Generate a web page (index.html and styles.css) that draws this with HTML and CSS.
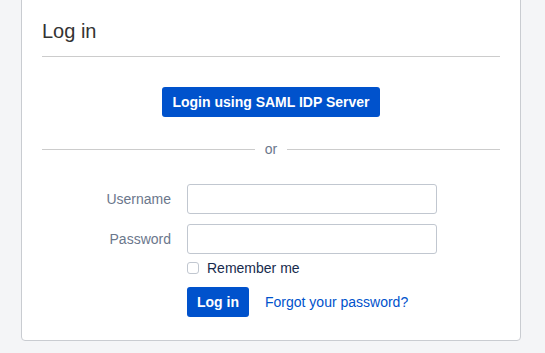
FILE: index.html
```html
<!DOCTYPE html>
<html lang="en">
  <head>
    <meta charset="UTF-8">
    <title>Log in</title>
    <link rel="stylesheet" href="styles.css">
  </head>
  <body>
    <div class="login-box">
      <h2 class="login-title">Log in</h2>

      <div class="sso-bar">
        <button class="btn btn-primary">Login using SAML IDP Server</button>
      </div>

      <div class="or-line"><span>or</span></div>

      <form class="login-form">
        <div class="field">
          <label for="username">Username</label>
          <input type="text" id="username">
        </div>
        <div class="field">
          <label for="password">Password</label>
          <input type="password" id="password">
        </div>
        <div class="field check-row">
          <span></span>
          <label class="check"><input type="checkbox"> Remember me</label>
        </div>
        <div class="field btn-row">
          <span></span>
          <div class="actions">
            <button type="button" class="btn btn-primary">Log in</button>
            <a href="#">Forgot your password?</a>
          </div>
        </div>
      </form>
    </div>
  </body>
</html>
```

FILE: styles.css
```css
* {
  margin: 0;
  padding: 0;
  box-sizing: border-box;
}

body {
  background-color: #f4f5f7;
  font-family: "Liberation Sans", Arial, sans-serif;
  font-size: 14px;
  color: #172b4d;
}

.login-box {
  width: 500px;
  margin: -10px 0 0 21px;
  padding: 28px 20px 23px;
  background-color: #fff;
  border: 1px solid #c9ccd1;
  border-radius: 4px;
}

.login-title {
  font-size: 20px;
  line-height: 24px;
  font-weight: normal;
  color: #333;
  padding-bottom: 13px;
  border-bottom: 1px solid #ccc;
}

.sso-bar {
  margin-top: 30px;
  text-align: center;
}

.btn {
  height: 30px;
  padding: 0 10px;
  border: none;
  border-radius: 3px;
  font-family: inherit;
  font-size: 14px;
  font-weight: bold;
  cursor: pointer;
}

.btn-primary {
  background-color: #0052cc;
  color: #fff;
}

.or-line {
  display: flex;
  align-items: center;
  margin-top: 22px;
  line-height: 20px;
  color: #6b778c;
}

.or-line::before,
.or-line::after {
  content: "";
  flex: 1;
  border-top: 1px solid #ccc;
}

.or-line span {
  padding: 0 10px;
}

.login-form {
  margin-top: 25px;
}

.field {
  display: grid;
  grid-template-columns: 129px 250px;
  column-gap: 16px;
  align-items: center;
  margin-bottom: 10px;
}

.field label {
  text-align: right;
  color: #6b778c;
}

.field input[type="text"],
.field input[type="password"] {
  height: 30px;
  border: 1px solid #c1c7d0;
  border-radius: 3px;
  padding: 0 8px;
  font-family: inherit;
  font-size: 14px;
}

.check-row {
  margin-top: -6px;
  margin-bottom: 9px;
}

.field .check {
  display: flex;
  align-items: center;
  text-align: left;
  line-height: 20px;
  color: #172b4d;
}

.check input {
  appearance: none;
  width: 12px;
  height: 12px;
  margin-right: 8px;
  border: 1px solid #c1c7d0;
  border-radius: 3px;
  background-color: #fff;
}

.btn-row {
  margin-bottom: 0;
}

.actions {
  display: flex;
  align-items: center;
  gap: 16px;
}

.actions a {
  color: #0052cc;
  text-decoration: none;
}
```
